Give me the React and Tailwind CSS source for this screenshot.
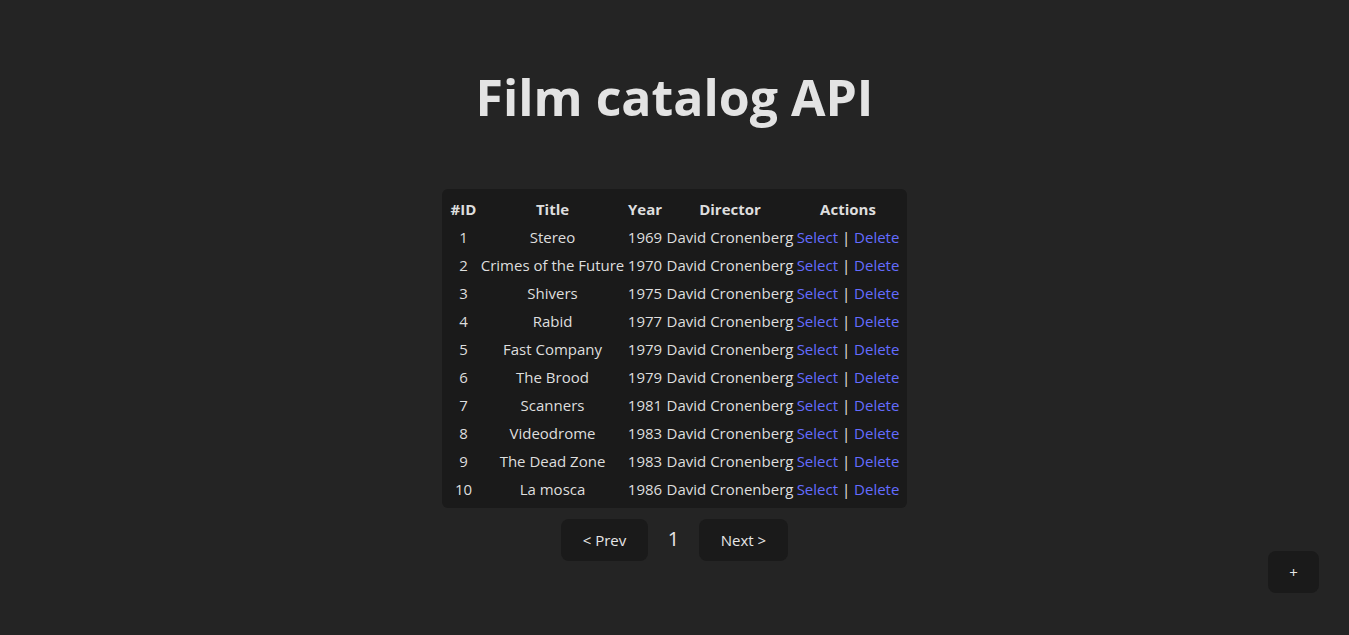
import React from "react";

const films = [
  [1, "Stereo", 1969],
  [2, "Crimes of the Future", 1970],
  [3, "Shivers", 1975],
  [4, "Rabid", 1977],
  [5, "Fast Company", 1979],
  [6, "The Brood", 1979],
  [7, "Scanners", 1981],
  [8, "Videodrome", 1983],
  [9, "The Dead Zone", 1983],
  [10, "La mosca", 1986],
];

const cols = "grid grid-cols-[31px_147px_38px_132px_104px]";

export default function App() {
  return (
    <div
      className="relative min-h-[635px] w-full bg-[#242424] text-[#dedede] flex flex-col items-center"
      style={{ fontFamily: '"Open Sans", "Noto Sans", sans-serif' }}
    >
      <h1 className="mt-[69px] h-[56px] leading-[56px] text-[50px] font-bold text-[#e3e3e3]">
        Film catalog API
      </h1>
      <div className="mt-[64px] w-[465px] rounded-[6px] bg-[#1a1a1a] pl-[6px] pr-[7px] pt-[6px] pb-[5px] text-[15px]">
        <div className={`${cols} h-[28px] items-center text-center font-bold whitespace-nowrap`}>
          <div>#ID</div>
          <div>Title</div>
          <div>Year</div>
          <div>Director</div>
          <div>Actions</div>
        </div>
        {films.map(([id, title, year]) => (
          <div
            key={id}
            className={`${cols} h-[28px] items-center text-center whitespace-nowrap`}
          >
            <div>{id}</div>
            <div>{title}</div>
            <div>{year}</div>
            <div>David Cronenberg</div>
            <div>
              <span className="text-[#646cff]">Select</span>{" "}
              <span className="text-[#e8e8e8]">|</span>{" "}
              <span className="text-[#646cff]">Delete</span>
            </div>
          </div>
        ))}
      </div>
      <div className="mt-[11px] flex items-center">
        <button className="h-[42px] w-[87px] rounded-[8px] bg-[#1a1a1a] text-[15px] text-[#e6e6e6]">
          &lt; Prev
        </button>
        <span className="w-[51px] text-center text-[20px] text-[#e6e6e6] -mt-[3px]">1</span>
        <button className="h-[42px] w-[89px] rounded-[8px] bg-[#1a1a1a] text-[15px] text-[#e6e6e6]">
          Next &gt;
        </button>
      </div>
      <button className="absolute right-[30px] top-[551px] h-[42px] w-[51px] rounded-[8px] bg-[#1a1a1a] text-[15px] text-[#e6e6e6]">
        +
      </button>
    </div>
  );
}
